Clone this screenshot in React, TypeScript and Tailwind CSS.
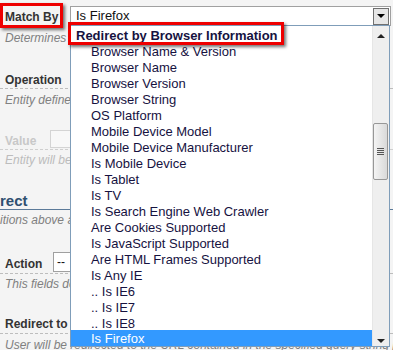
import React from "react";

const options: string[] = [
  "Browser Name & Version",
  "Browser Name",
  "Browser Version",
  "Browser String",
  "OS Platform",
  "Mobile Device Model",
  "Mobile Device Manufacturer",
  "Is Mobile Device",
  "Is Tablet",
  "Is TV",
  "Is Search Engine Web Crawler",
  "Are Cookies Supported",
  "Is JavaScript Supported",
  "Are HTML Frames Supported",
  "Is Any IE",
  ".. Is IE6",
  ".. Is IE7",
  ".. Is IE8",
  "Is Firefox",
];

// hint lines are cut at the dropdown edge
const hint = "w-[70px] overflow-hidden whitespace-nowrap text-[12px] italic leading-[16px]";

const App: React.FC = () => {
  return (
    <div className="relative h-[350px] w-[393px] overflow-hidden bg-[#f4f4f4] font-['Liberation_Sans',Arial,sans-serif]">
      {/* page behind the open dropdown */}
      <div className="flex flex-col">
        <div className="mt-[6px] flex h-[20px] items-center">
          <span className="w-[70px] pl-[5px] pt-[1px] text-[12px] font-bold text-[#333]">Match By</span>
          <div className="flex h-[20px] w-[321px] items-center justify-between border border-[#a0a0a0] bg-white pl-[5px]">
            <span className="text-[13px] text-[#111]">Is Firefox</span>
            <div className="mr-px flex h-[17px] w-[16px] items-center justify-center border border-[#707070] bg-[#e6e6e6]">
              <div className="h-0 w-0 border-x-[4px] border-t-[4px] border-x-transparent border-t-black" />
            </div>
          </div>
        </div>
        <p className={`mt-[4px] pl-[5px] text-[#808080] ${hint}`}>Determines which</p>

        <div className="mt-[24px] flex h-[19px] items-center border-b border-dashed border-[#bdbdbd] pl-[5px]">
          <span className="pt-[1px] text-[12px] font-bold text-[#333]">Operation</span>
        </div>
        <p className={`mt-[3px] pl-[5px] text-[#808080] ${hint}`}>Entity defined</p>

        <div className="mt-[22px] flex h-[20px] items-start border-b border-dashed border-[#cfcfcf] pl-[5px]">
          <span className="w-[45px] pt-[2px] text-[12px] font-bold text-[#c8c8c8]">Value</span>
          <div className="h-[18px] w-[60px] border border-[#d4d4d4] bg-[#f8f8f8]" />
        </div>
        <p className={`mt-[2px] pl-[5px] text-[#bcbcbc] ${hint}`}>Entity will be</p>

        <div className="mt-[23px] flex h-[19px] items-center border-b border-[#5b7a99]">
          <span className="pt-[2px] text-[15px] font-bold text-[#2f5070]">rect</span>
        </div>
        <p className={`mt-[2px] text-[#808080] ${hint}`}>itions above are</p>

        <div className="mt-[24px] flex h-[22px] items-start border-b border-dashed border-[#bdbdbd] pl-[5px]">
          <span className="w-[48px] pt-[3px] text-[12px] font-bold text-[#333]">Action</span>
          <div className="flex h-[20px] w-[80px] items-center border border-[#a0a0a0] bg-white pl-[3px] text-[12px] text-[#111]">
            --
          </div>
        </div>
        <p className={`mt-[2px] pl-[5px] text-[#808080] ${hint}`}>This fields de</p>

        <div className="mt-[22px] flex h-[20px] items-center border-b border-dashed border-[#bdbdbd] pl-[5px]">
          <span className="text-[12px] font-bold text-[#333]">Redirect to</span>
        </div>
        <p className="mt-[3px] pl-[5px] text-[12px] italic leading-[16px] text-[#808080] whitespace-nowrap">
          User will be redirected to the URL contained in the specified query string parameter
        </p>
      </div>

      {/* open dropdown list */}
      <div className="absolute left-[70px] top-[25px] flex h-[322px] w-[320px] border border-[#7f9db9] bg-white">
        <ul className="flex-1 text-[13px] leading-[16px] text-[#16123f]">
          <li className="h-[16px] pl-[5px] pt-[2px] font-bold">Redirect by Browser Information</li>
          {options.map((o) => (
            <li
              key={o}
              className={
                o === "Is Firefox"
                  ? "h-[16px] bg-[#3399ff] pl-[20px] pt-[1px] text-white"
                  : "h-[16px] pl-[20px] pt-[2px]"
              }
            >
              {o}
            </li>
          ))}
        </ul>
        <div className="relative w-[17px] border-l border-[#e6e6e6] bg-[#efefef]">
          <div className="absolute left-[4px] top-[8px] h-0 w-0 border-x-[4px] border-b-[4px] border-x-transparent border-b-[#222]" />
          <div className="absolute left-0 top-[97px] flex h-[57px] w-[15px] items-center justify-center rounded-[2px] border border-[#979797] bg-gradient-to-r from-[#f4f4f4] to-[#d9d9d9]">
            <div className="flex flex-col gap-[1px]">
              <div className="h-px w-[7px] bg-[#555]" />
              <div className="h-px w-[7px] bg-[#555]" />
              <div className="h-px w-[7px] bg-[#555]" />
              <div className="h-px w-[7px] bg-[#555]" />
            </div>
          </div>
          <div className="absolute bottom-[3px] left-[4px] h-0 w-0 border-x-[4px] border-t-[4px] border-x-transparent border-t-[#222]" />
        </div>
      </div>

      {/* annotation boxes */}
      <div className="absolute left-0 top-[3px] h-[25px] w-[63px] border-[3px] border-[#ee0000] shadow-[2px_2px_3px_rgba(0,0,0,0.55)]" />
      <div className="absolute left-[68px] top-[22px] h-[23px] w-[216px] border-[3px] border-[#ee0000] shadow-[2px_2px_3px_rgba(0,0,0,0.55)]" />
    </div>
  );
};

export default App;
